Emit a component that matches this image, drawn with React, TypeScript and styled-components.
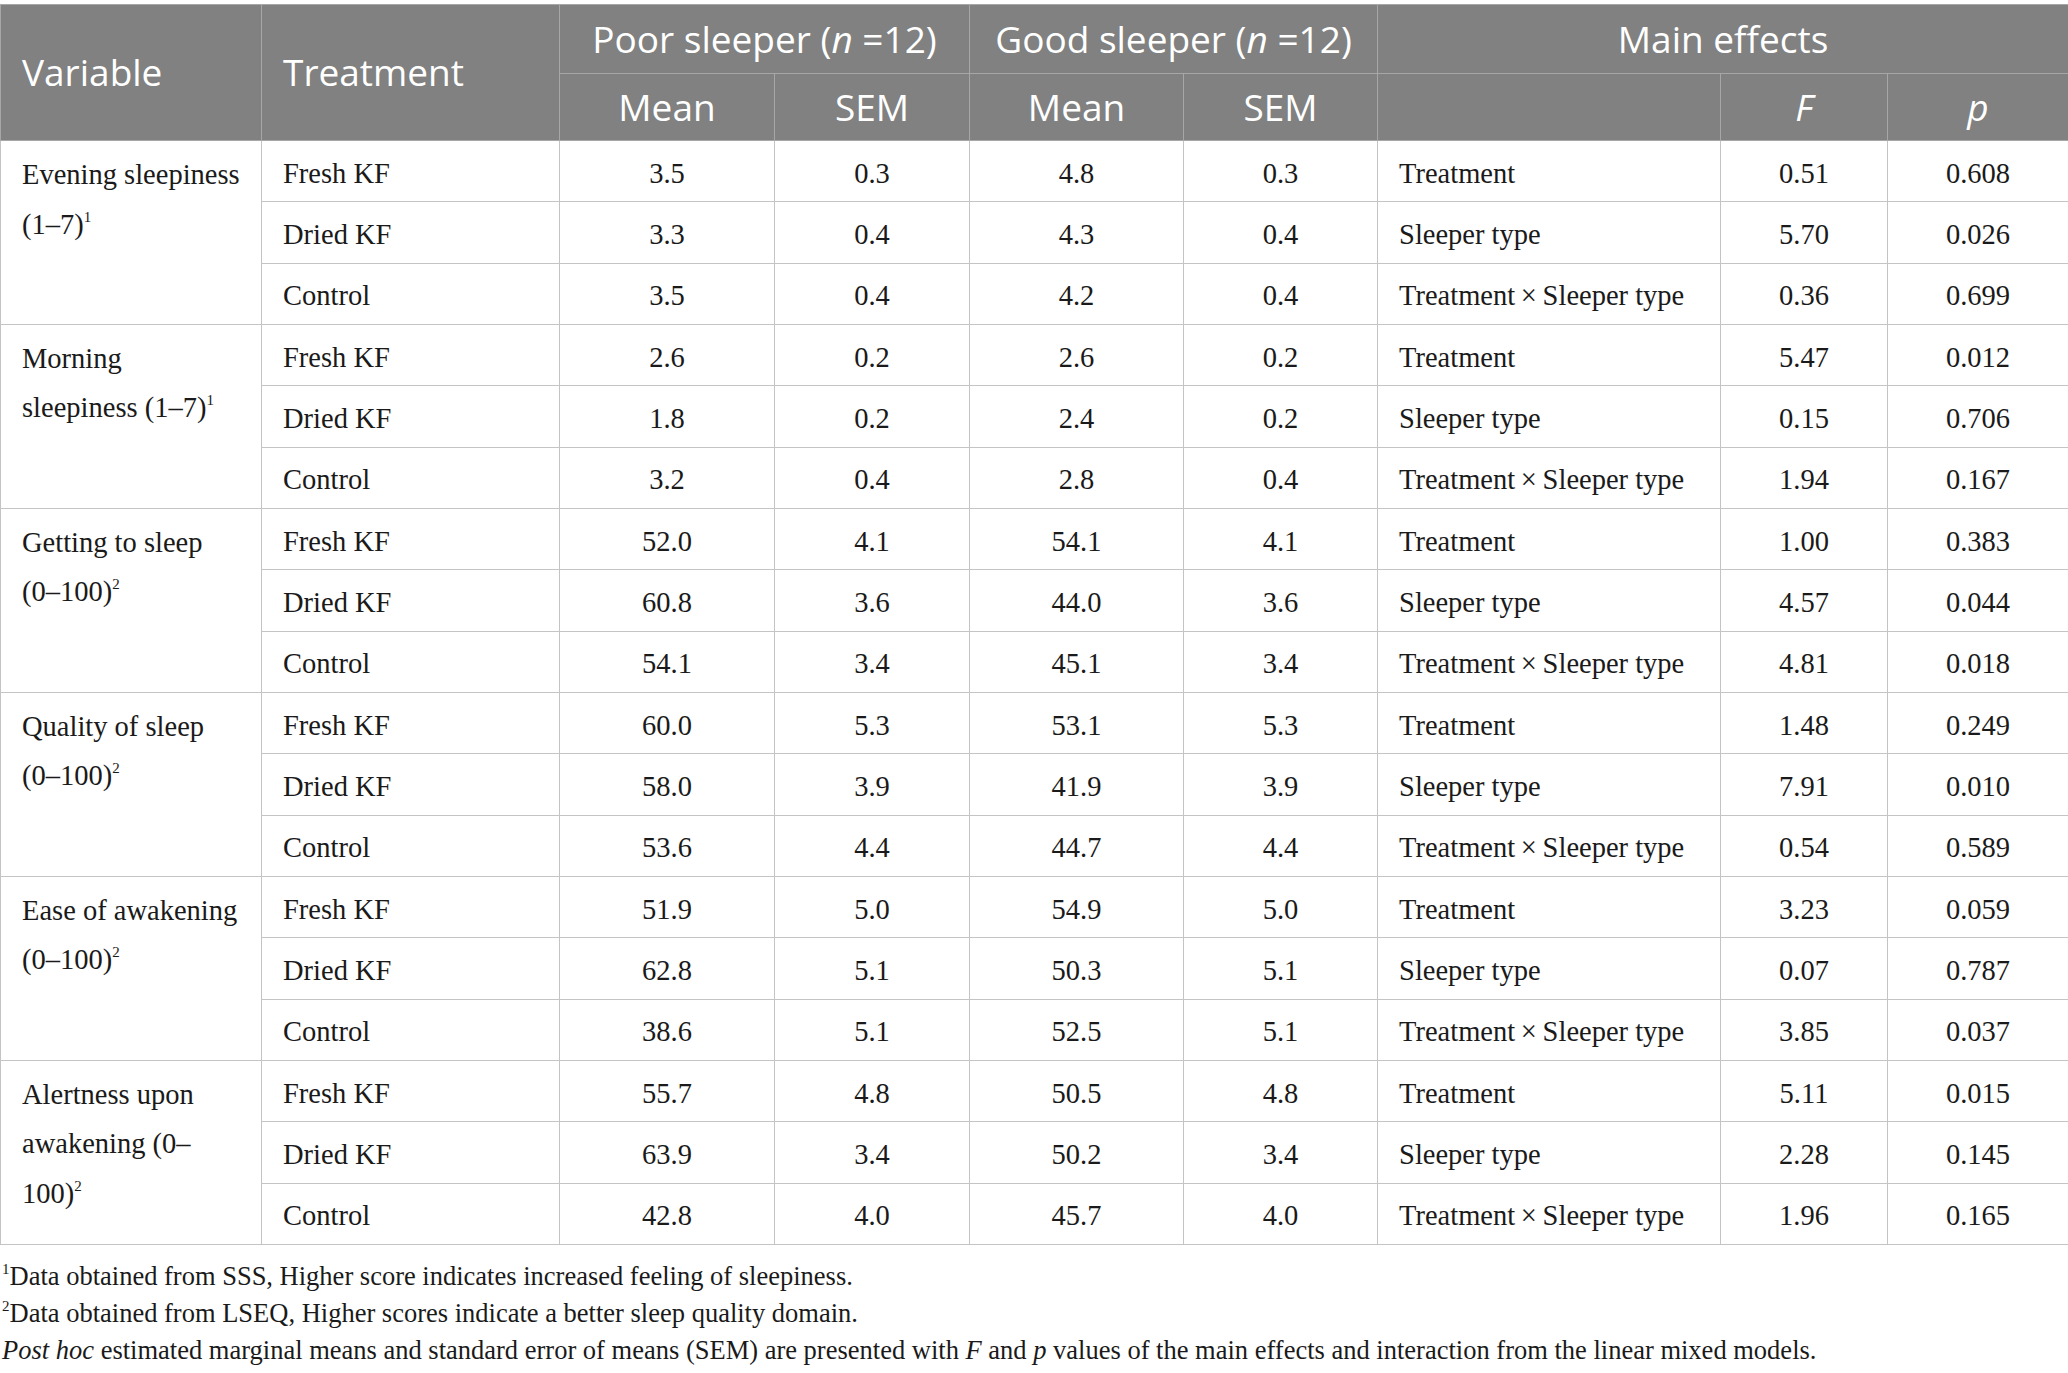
import React from 'react';
import styled, { createGlobalStyle } from 'styled-components';

const GlobalStyle = createGlobalStyle`
  html, body {
    margin: 0;
    padding: 0;
    background: #ffffff;
  }
`;

const Page = styled.div`
  width: 2068px;
  padding-top: 4px;
  font-family: "Liberation Serif", "Times New Roman", serif;
  color: #1a1a1a;
`;

const Table = styled.table`
  width: 2068px;
  table-layout: fixed;
  border-collapse: collapse;
`;

const HeadRow = styled.tr<{ $h: number }>`
  height: ${p => p.$h}px;
  background: #808180;
`;

const HeadCell = styled.th<{ $align?: 'left' | 'center'; $italic?: boolean }>`
  font-family: "Open Sans", "Noto Sans", sans-serif;
  font-weight: 400;
  font-size: 37px;
  color: #ffffff;
  text-align: ${p => p.$align || 'center'};
  font-style: ${p => (p.$italic ? 'italic' : 'normal')};
  padding: 0 0 0 ${p => (p.$align === 'left' ? '21px' : '0')};
  border: 1px solid #a6a7a6;
  vertical-align: middle;
  line-height: 1.2;
  white-space: nowrap;
`;

const BodyRow = styled.tr`
  height: 61.33px;
`;

const Cell = styled.td<{ $num?: boolean }>`
  font-size: 28.5px;
  text-align: ${p => (p.$num ? 'center' : 'left')};
  padding: 5px 0 0 ${p => (p.$num ? '0' : '21px')};
  border: 1px solid #c4c4c4;
  vertical-align: middle;
  white-space: nowrap;
`;

const VarCell = styled.td`
  font-size: 28.5px;
  line-height: 49.5px;
  padding: 9px 6px 0 21px;
  border: 1px solid #c4c4c4;
  vertical-align: top;
  white-space: nowrap;
`;

const Sup = styled.sup`
  font-size: 15px;
  vertical-align: 12px;
  line-height: 0;
`;

const Notes = styled.div`
  margin-top: 13px;
  font-size: 26.5px;
  line-height: 37px;
  padding-left: 2px;
`;

const NoteSup = styled.sup`
  font-size: 15px;
  vertical-align: 11px;
  line-height: 0;
`;

type Row = [string, string, string, string, string, string, string, string];

interface Group {
  label: React.ReactNode;
  rows: Row[];
}

const effects = ['Treatment', 'Sleeper type', 'Treatment\u2009×\u2009Sleeper type'];

const groups: Group[] = [
  {
    label: <>Evening sleepiness<br />(1–7)<Sup>1</Sup></>,
    rows: [
      ['Fresh KF', '3.5', '0.3', '4.8', '0.3', effects[0], '0.51', '0.608'],
      ['Dried KF', '3.3', '0.4', '4.3', '0.4', effects[1], '5.70', '0.026'],
      ['Control', '3.5', '0.4', '4.2', '0.4', effects[2], '0.36', '0.699'],
    ],
  },
  {
    label: <>Morning<br />sleepiness (1–7)<Sup>1</Sup></>,
    rows: [
      ['Fresh KF', '2.6', '0.2', '2.6', '0.2', effects[0], '5.47', '0.012'],
      ['Dried KF', '1.8', '0.2', '2.4', '0.2', effects[1], '0.15', '0.706'],
      ['Control', '3.2', '0.4', '2.8', '0.4', effects[2], '1.94', '0.167'],
    ],
  },
  {
    label: <>Getting to sleep<br />(0–100)<Sup>2</Sup></>,
    rows: [
      ['Fresh KF', '52.0', '4.1', '54.1', '4.1', effects[0], '1.00', '0.383'],
      ['Dried KF', '60.8', '3.6', '44.0', '3.6', effects[1], '4.57', '0.044'],
      ['Control', '54.1', '3.4', '45.1', '3.4', effects[2], '4.81', '0.018'],
    ],
  },
  {
    label: <>Quality of sleep<br />(0–100)<Sup>2</Sup></>,
    rows: [
      ['Fresh KF', '60.0', '5.3', '53.1', '5.3', effects[0], '1.48', '0.249'],
      ['Dried KF', '58.0', '3.9', '41.9', '3.9', effects[1], '7.91', '0.010'],
      ['Control', '53.6', '4.4', '44.7', '4.4', effects[2], '0.54', '0.589'],
    ],
  },
  {
    label: <>Ease of awakening<br />(0–100)<Sup>2</Sup></>,
    rows: [
      ['Fresh KF', '51.9', '5.0', '54.9', '5.0', effects[0], '3.23', '0.059'],
      ['Dried KF', '62.8', '5.1', '50.3', '5.1', effects[1], '0.07', '0.787'],
      ['Control', '38.6', '5.1', '52.5', '5.1', effects[2], '3.85', '0.037'],
    ],
  },
  {
    label: <>Alertness upon<br />awakening (0–<br />100)<Sup>2</Sup></>,
    rows: [
      ['Fresh KF', '55.7', '4.8', '50.5', '4.8', effects[0], '5.11', '0.015'],
      ['Dried KF', '63.9', '3.4', '50.2', '3.4', effects[1], '2.28', '0.145'],
      ['Control', '42.8', '4.0', '45.7', '4.0', effects[2], '1.96', '0.165'],
    ],
  },
];

const widths = [261, 298, 215, 195, 214, 194, 343, 167, 181];

export default function App() {
  return (
    <>
      <GlobalStyle />
      <Page>
        <Table>
          <colgroup>
            {widths.map((w, i) => (
              <col key={i} style={{ width: w }} />
            ))}
          </colgroup>
          <thead>
            <HeadRow $h={69}>
              <HeadCell $align="left" rowSpan={2}>Variable</HeadCell>
              <HeadCell $align="left" rowSpan={2}>Treatment</HeadCell>
              <HeadCell colSpan={2}>Poor sleeper (<i>n</i> =12)</HeadCell>
              <HeadCell colSpan={2}>Good sleeper (<i>n</i> =12)</HeadCell>
              <HeadCell colSpan={3}>Main effects</HeadCell>
            </HeadRow>
            <HeadRow $h={67}>
              <HeadCell>Mean</HeadCell>
              <HeadCell>SEM</HeadCell>
              <HeadCell>Mean</HeadCell>
              <HeadCell>SEM</HeadCell>
              <HeadCell />
              <HeadCell $italic>F</HeadCell>
              <HeadCell $italic>p</HeadCell>
            </HeadRow>
          </thead>
          <tbody>
            {groups.map((g, gi) =>
              g.rows.map((r, ri) => (
                <BodyRow key={`${gi}-${ri}`}>
                  {ri === 0 && <VarCell rowSpan={3}>{g.label}</VarCell>}
                  <Cell>{r[0]}</Cell>
                  <Cell $num>{r[1]}</Cell>
                  <Cell $num>{r[2]}</Cell>
                  <Cell $num>{r[3]}</Cell>
                  <Cell $num>{r[4]}</Cell>
                  <Cell>{r[5]}</Cell>
                  <Cell $num>{r[6]}</Cell>
                  <Cell $num>{r[7]}</Cell>
                </BodyRow>
              ))
            )}
          </tbody>
        </Table>
        <Notes>
          <div><NoteSup>1</NoteSup>Data obtained from SSS, Higher score indicates increased feeling of sleepiness.</div>
          <div><NoteSup>2</NoteSup>Data obtained from LSEQ, Higher scores indicate a better sleep quality domain.</div>
          <div>
            <i>Post hoc</i> estimated marginal means and standard error of means (SEM) are presented with <i>F</i> and <i>p</i> values of the main effects and interaction from the linear mixed models.
          </div>
        </Notes>
      </Page>
    </>
  );
}
